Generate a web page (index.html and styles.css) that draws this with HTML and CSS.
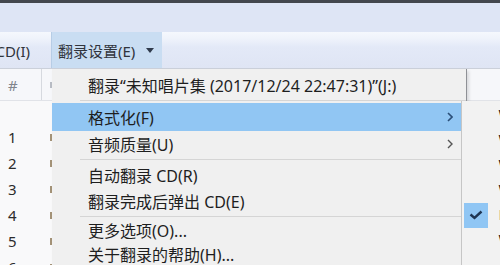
FILE: index.html
```html
<!DOCTYPE html>
<html lang="zh-CN">
<head>
<meta charset="utf-8">
<title>翻录设置</title>
<link rel="stylesheet" href="styles.css">
</head>
<body>
<div class="screen">
  <div class="topbar"></div>
  <div class="band"></div>
  <div class="toolbar">
    <div class="tb-item"><span>翻录 CD(I)</span></div>
    <div class="tb-button">
      <span>翻录设置(E)</span>
      <svg class="caret" width="8" height="5" viewBox="0 0 8 5"><path d="M0 0H8L4 5Z" fill="#2f3a4c"/></svg>
    </div>
  </div>
  <div class="list">
    <div class="list-header">
      <div class="h-num">#</div>
      <div class="h-col"><span class="h-mark"></span></div>
    </div>
    <div class="rows">
      <div class="row"><div class="c-num">1</div><div class="c-col"><span class="tick"></span></div></div>
      <div class="row"><div class="c-num">2</div><div class="c-col"><span class="tick"></span></div></div>
      <div class="row"><div class="c-num">3</div><div class="c-col"><span class="tick"></span></div></div>
      <div class="row"><div class="c-num">4</div><div class="c-col"><span class="tick"></span></div></div>
      <div class="row"><div class="c-num">5</div><div class="c-col"><span class="tick"></span></div></div>
      <div class="row"><div class="c-num">6</div><div class="c-col"><span class="tick"></span></div></div>
    </div>

    <div class="menu">
      <div class="item i-first">翻录“未知唱片集 (2017/12/24 22:47:31)”(J:)</div>
      <div class="sep"></div>
      <div class="item active"><span>格式化(F)</span>
        <svg class="chev" width="6" height="10" viewBox="0 0 6 10"><path d="M1 1L5 5L1 9" fill="none" stroke="#2b4f78" stroke-width="1.6"/></svg>
      </div>
      <div class="item"><span>音频质量(U)</span>
        <svg class="chev" width="6" height="10" viewBox="0 0 6 10"><path d="M1 1L5 5L1 9" fill="none" stroke="#555" stroke-width="1.4"/></svg>
      </div>
      <div class="sep"></div>
      <div class="item">自动翻录 CD(R)</div>
      <div class="item">翻录完成后弹出 CD(E)</div>
      <div class="sep tight"></div>
      <div class="item short">更多选项(O)...</div>
      <div class="item short">关于翻录的帮助(H)...</div>
    </div>

    <div class="submenu">
      <div class="sub-item"><span class="gutter"></span><span>Windows Media Audio</span></div>
      <div class="sub-item"><span class="gutter"></span><span>Windows Media Audio Pro</span></div>
      <div class="sub-item"><span class="gutter"></span><span>Windows Media Audio (可变比特率)</span></div>
      <div class="sub-item"><span class="gutter"></span><span>Windows Media Audio 无损</span></div>
      <div class="sub-item"><span class="gutter"><span class="check"><svg width="14" height="10" viewBox="0 0 14 10"><path d="M1.5 4.5L5.5 8L12.5 1.5" fill="none" stroke="#1f3654" stroke-width="2.4"/></svg></span></span><span>MP3</span></div>
      <div class="sub-item"><span class="gutter"></span><span>WAV (无损)</span></div>
    </div>
  </div>
</div>
</body>
</html>
```

FILE: styles.css
```css
html, body {
  margin: 0;
  padding: 0;
}
body {
  width: 500px;
  height: 265px;
  overflow: hidden;
  background: #f9f9fa;
  font-family: "Noto Sans", "Noto Sans CJK SC", sans-serif;
  color: #1e1e1e;
}
.screen {
  width: 500px;
  height: 265px;
  overflow: hidden;
}
.topbar {
  height: 3px;
  background: #43474e;
}
.band {
  height: 29px;
  background: #dee5f5;
}
.toolbar {
  height: 36px;
  display: flex;
  background: linear-gradient(to bottom, #f5f8fd 0%, #eff3fb 18%, #e3e9f7 42%, #dfe5f4 100%);
  border-bottom: 1px solid #cbd0da;
  font-size: 15px;
  color: #30343c;
}
.tb-item {
  width: 51px;
  flex: none;
  display: flex;
  align-items: center;
  justify-content: flex-end;
  padding-right: 21px;
  box-sizing: border-box;
  white-space: nowrap;
}
.tb-button {
  width: 111px;
  flex: none;
  display: flex;
  align-items: center;
  gap: 11px;
  padding-left: 6px;
  box-sizing: border-box;
  background: #c9ddf2;
  border-left: 1px solid #b7cde6;
  white-space: nowrap;
}
.caret {
  display: block;
  margin-top: 1px;
}
.list {
  position: relative;
  height: 196px;
}
.list-header {
  height: 31px;
  display: flex;
  background: #f6f7fa;
  border-bottom: 1px solid #e1e3e8;
}
.h-num {
  width: 42px;
  border-right: 1px solid #d6d9df;
  box-sizing: border-box;
  padding-left: 8px;
  display: flex;
  align-items: center;
  color: #80848c;
  font-size: 15px;
}
.h-col {
  flex: 1;
  padding-left: 8px;
  display: flex;
  align-items: center;
}
.h-mark {
  width: 2px;
  height: 6px;
  background: #b8bcc4;
}
.rows {
  padding-top: 23px;
}
.row {
  height: 26px;
  display: flex;
}
.c-num {
  width: 42px;
  padding-left: 8px;
  box-sizing: border-box;
  display: flex;
  align-items: center;
  font-size: 15px;
  color: #2c2c2c;
}
.c-col {
  flex: 1;
  padding-left: 8px;
  display: flex;
  align-items: center;
}
.tick {
  width: 2px;
  height: 7px;
  background: #a39277;
}
.menu {
  position: absolute;
  left: 52px;
  top: 0;
  width: 415px;
  height: 220px;
  box-sizing: border-box;
  padding-top: 3px;
  background: #f0f0f0;
  border-right: 1px solid #8f9196;
  box-shadow: 2px 2px 3px rgba(0,0,0,0.12);
  font-size: 16px;
  color: #1e1e1e;
}
.item {
  height: 26px;
  display: flex;
  align-items: center;
  justify-content: space-between;
  padding-left: 36px;
  padding-right: 13px;
  white-space: nowrap;
}
.item.active {
  background: #91c6f3;
  height: 28px;
}
.item.short {
  height: 24px;
}
.sep {
  height: 1px;
  margin: 2px 0 2px 28px;
  background: #d5d5d5;
}
.sep.tight {
  margin: 2px 0 1px 28px;
}
.chev {
  display: block;
}
.submenu {
  position: absolute;
  left: 461px;
  top: 32px;
  width: 220px;
  height: 170px;
  background: #f2f2f2;
  border-left: 1px solid #c6c6c6;
  font-size: 15px;
  color: #1e1e1e;
}
.sub-item {
  height: 25px;
  display: flex;
  align-items: center;
  white-space: nowrap;
}
.gutter {
  width: 36.5px;
  flex: none;
  display: flex;
  align-items: center;
}
.check {
  width: 24px;
  height: 25px;
  margin-left: 2px;
  margin-top: 3px;
  background: #90c6f4;
  display: flex;
  align-items: center;
  justify-content: center;
}
.check svg {
  display: block;
}
```
